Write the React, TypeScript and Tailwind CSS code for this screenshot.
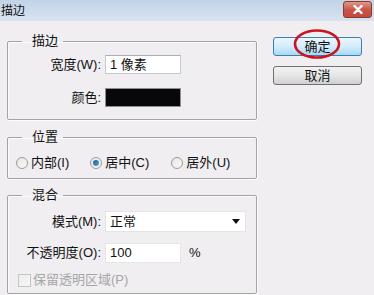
import { ReactNode } from "react";

/** 分组框 (fieldset + legend) */
type GroupProps = {
    title: string,
    className: string,
    children: ReactNode
}

function Group({ title, className, children }: GroupProps) {
    return (
        <fieldset className={`border border-[#a4a4a4] rounded-[2px] shadow-[inset_1px_1px_0_#fbfbfb,1px_1px_0_#fbfbfb] ${className}`}>
            <legend className="ml-[14px] pl-[10px] pr-[5px] text-[13px] leading-[16px]">{title}</legend>
            {children}
        </fieldset>
    )
}

/** 左侧标签 + 控件的一行 */
function FieldRow({ label, className, children }: { label: string, className: string, children: ReactNode }) {
    return (
        <div className={`flex items-center ${className}`}>
            <span className="w-[94px] text-right text-[13px] leading-[16px] pr-[1px]">{label}</span>
            <div className="ml-[3px] flex items-center">{children}</div>
        </div>
    )
}

function Radio({ checked, label, className }: { checked?: boolean, label: string, className: string }) {
    return (
        <div className={`flex items-center ${className}`}>
            <span className="w-[12px] h-[12px] rounded-full border border-[#9a9a9a] bg-gradient-to-br from-[#e6e6e6] to-[#fafafa] flex items-center justify-center">
                {checked && <span className="w-[6px] h-[6px] rounded-full bg-gradient-to-br from-[#1c5c8c] to-[#5ba3d6]" />}
            </span>
            <span className="ml-[3px] text-[13px] leading-[16px]">{label}</span>
        </div>
    )
}

export default function App() {
    return (
        <div className="relative w-[374px] h-[295px] overflow-hidden bg-[#f0eef1] text-[#111] font-['Liberation_Sans','Noto_Sans_CJK_SC',sans-serif]">

            {/* 标题栏 */}
            <div className="h-[21px] flex items-center justify-between bg-gradient-to-b from-[#c2d3e8] to-[#d8e3f0]">
                <span className="pl-[1px] text-[12px] leading-[16px]">描边</span>
                <div className="mr-[2px] -mt-[3px] w-[29px] h-[17px] rounded-[3px] border border-[#8a3a32] bg-gradient-to-b from-[#e0978a] via-[#c9564a] to-[#c2493c] flex items-center justify-center">
                    <svg width="10" height="9" viewBox="0 0 10 9">
                        <path d="M1.5 1 L8.5 8 M8.5 1 L1.5 8" stroke="#fff" strokeWidth="2.4" strokeLinecap="round" />
                    </svg>
                </div>
            </div>

            <div className="flex">
                {/* 左侧 */}
                <div className="pl-[7px] w-[257px] flex flex-col">
                    <Group title="描边" className="mt-[12px] h-[87px]">
                        <FieldRow label="宽度(W):" className="mt-[6px]">
                            <div className="w-[76px] h-[19px] bg-white border border-[#c3c9d2] border-t-[#abb0b8] pl-[4px] text-[13px] leading-[17px]">1 像素</div>
                        </FieldRow>
                        <FieldRow label="颜色:" className="mt-[14px]">
                            <div className="w-[76px] h-[19px] bg-[#08070c] border border-[#8f8f8f]" />
                        </FieldRow>
                    </Group>

                    <Group title="位置" className="mt-[9px] h-[50px]">
                        <div className="flex items-center h-[16px] mt-[10px] pl-[8px]">
                            <Radio label="内部(I)" className="" />
                            <Radio checked label="居中(C)" className="ml-[21px]" />
                            <Radio label="居外(U)" className="ml-[22px]" />
                        </div>
                    </Group>

                    <Group title="混合" className="mt-[8px] h-[107px]">
                        <FieldRow label="模式(M):" className="mt-[8px]">
                            <div className="w-[141px] h-[21px] bg-white border border-[#e4e4e4] pl-[4px] flex items-center justify-between text-[13px]">
                                <span>正常</span>
                                <svg width="8" height="5" viewBox="0 0 8 5" className="mr-[5px]">
                                    <path d="M0 0 L8 0 L4 5 Z" fill="#111" />
                                </svg>
                            </div>
                        </FieldRow>
                        <FieldRow label="不透明度(O):" className="mt-[11px]">
                            <div className="w-[76px] h-[20px] bg-white border border-[#e6e6e6] pl-[4px] text-[13px] leading-[18px]">100</div>
                            <span className="ml-[8px] text-[13px]">%</span>
                        </FieldRow>
                        <div className="flex items-center mt-[9px] pl-[10px]">
                            <span className="w-[13px] h-[13px] border border-[#c4c4c4] bg-gradient-to-br from-[#ececec] to-[#f8f8f8]" />
                            <span className="ml-[2px] text-[13px] leading-[16px] text-[#a6a6a6]">保留透明区域(P)</span>
                        </div>
                    </Group>
                </div>

                {/* 右侧按钮 */}
                <div className="ml-[16px] pt-[16px] flex flex-col">
                    <button className="w-[89px] h-[19px] rounded-[3px] border border-[#3c7fb1] bg-gradient-to-b from-[#eaf6fd] via-[#d5ecfa] to-[#a7d9f5] text-[13px] leading-[16px]">确定</button>
                    <button className="mt-[10px] w-[89px] h-[19px] rounded-[3px] border border-[#707070] bg-gradient-to-b from-[#f2f2f2] via-[#e6e6e6] to-[#d0d0d0] text-[13px] leading-[16px]">取消</button>
                </div>
            </div>

            {/* 红色标注圈 */}
            <svg className="absolute left-[292px] top-[28px]" width="50" height="32" viewBox="0 0 50 32">
                <ellipse cx="25" cy="16" rx="22" ry="13.5" fill="none" stroke="#cc1420" strokeWidth="2.6" />
            </svg>
        </div>
    )
}
